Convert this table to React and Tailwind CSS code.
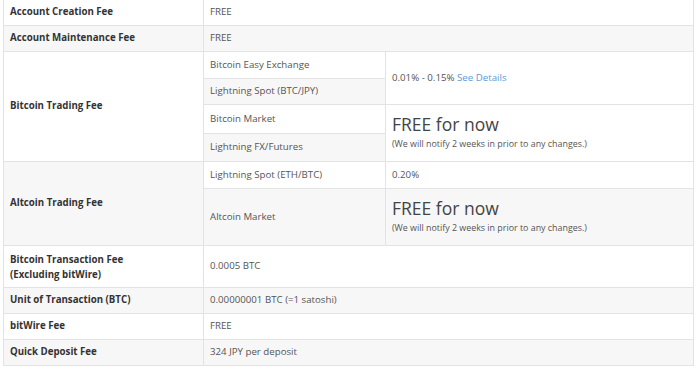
const cell = "border border-[#e3e3e3] px-[6px] align-middle";
const label = `${cell} font-bold text-[#333]`;
const val = `${cell} text-[#555]`;

function FreeForNow() {
  return (
    <div className="flex flex-col gap-[3px] pb-[4px]">
      <span className="text-[17.5px] leading-[22px] text-[#444]">FREE for now</span>
      <span className="text-[8.9px] leading-[12px] text-[#555]">
        (We will notify 2 weeks in prior to any changes.)
      </span>
    </div>
  );
}

export default function App() {
  return (
    <div className="w-[696px] h-[370px] bg-white overflow-hidden font-['Open_Sans',sans-serif] text-[9.7px]">
      <table className="ml-[3px] -mt-px w-[690px] border-collapse table-fixed">
        <colgroup>
          <col className="w-[200px]" />
          <col className="w-[182px]" />
          <col className="w-[308px]" />
        </colgroup>
        <tbody>
          <tr className="h-[26px]">
            <td className={label}>Account Creation Fee</td>
            <td className={val} colSpan={2}>FREE</td>
          </tr>
          <tr className="h-[26px] bg-[#f7f7f7]">
            <td className={label}>Account Maintenance Fee</td>
            <td className={val} colSpan={2}>FREE</td>
          </tr>
          <tr className="h-[27px]">
            <td className={label} rowSpan={4}>Bitcoin Trading Fee</td>
            <td className={val}>Bitcoin Easy Exchange</td>
            <td className={`${val} text-[#444]`} rowSpan={2}>
              0.01% - 0.15%{" "}
              <a href="#" className="text-[#5b9bd5]">See Details</a>
            </td>
          </tr>
          <tr className="h-[26px]">
            <td className={`${val} bg-[#f7f7f7]`}>Lightning Spot (BTC/JPY)</td>
          </tr>
          <tr className="h-[29px]">
            <td className={val}>Bitcoin Market</td>
            <td className={val} rowSpan={2}>
              <FreeForNow />
            </td>
          </tr>
          <tr className="h-[28px]">
            <td className={`${val} bg-[#f7f7f7]`}>Lightning FX/Futures</td>
          </tr>
          <tr className="h-[27px]">
            <td className={`${label} bg-[#f7f7f7]`} rowSpan={2}>Altcoin Trading Fee</td>
            <td className={`${val} bg-white`}>Lightning Spot (ETH/BTC)</td>
            <td className={`${val} bg-white`}>0.20%</td>
          </tr>
          <tr className="h-[57px] bg-[#f7f7f7]">
            <td className={val}>Altcoin Market</td>
            <td className={val}>
              <FreeForNow />
            </td>
          </tr>
          <tr className="h-[42px]">
            <td className={`${label} leading-[15px]`}>
              Bitcoin Transaction Fee
              <br />
              (Excluding bitWire)
            </td>
            <td className={val} colSpan={2}>0.0005 BTC</td>
          </tr>
          <tr className="h-[26px] bg-[#f7f7f7]">
            <td className={label}>Unit of Transaction (BTC)</td>
            <td className={val} colSpan={2}>0.00000001 BTC (=1 satoshi)</td>
          </tr>
          <tr className="h-[26px]">
            <td className={label}>bitWire Fee</td>
            <td className={val} colSpan={2}>FREE</td>
          </tr>
          <tr className="h-[26px] bg-[#f7f7f7]">
            <td className={label}>Quick Deposit Fee</td>
            <td className={val} colSpan={2}>324 JPY per deposit</td>
          </tr>
        </tbody>
      </table>
    </div>
  );
}
